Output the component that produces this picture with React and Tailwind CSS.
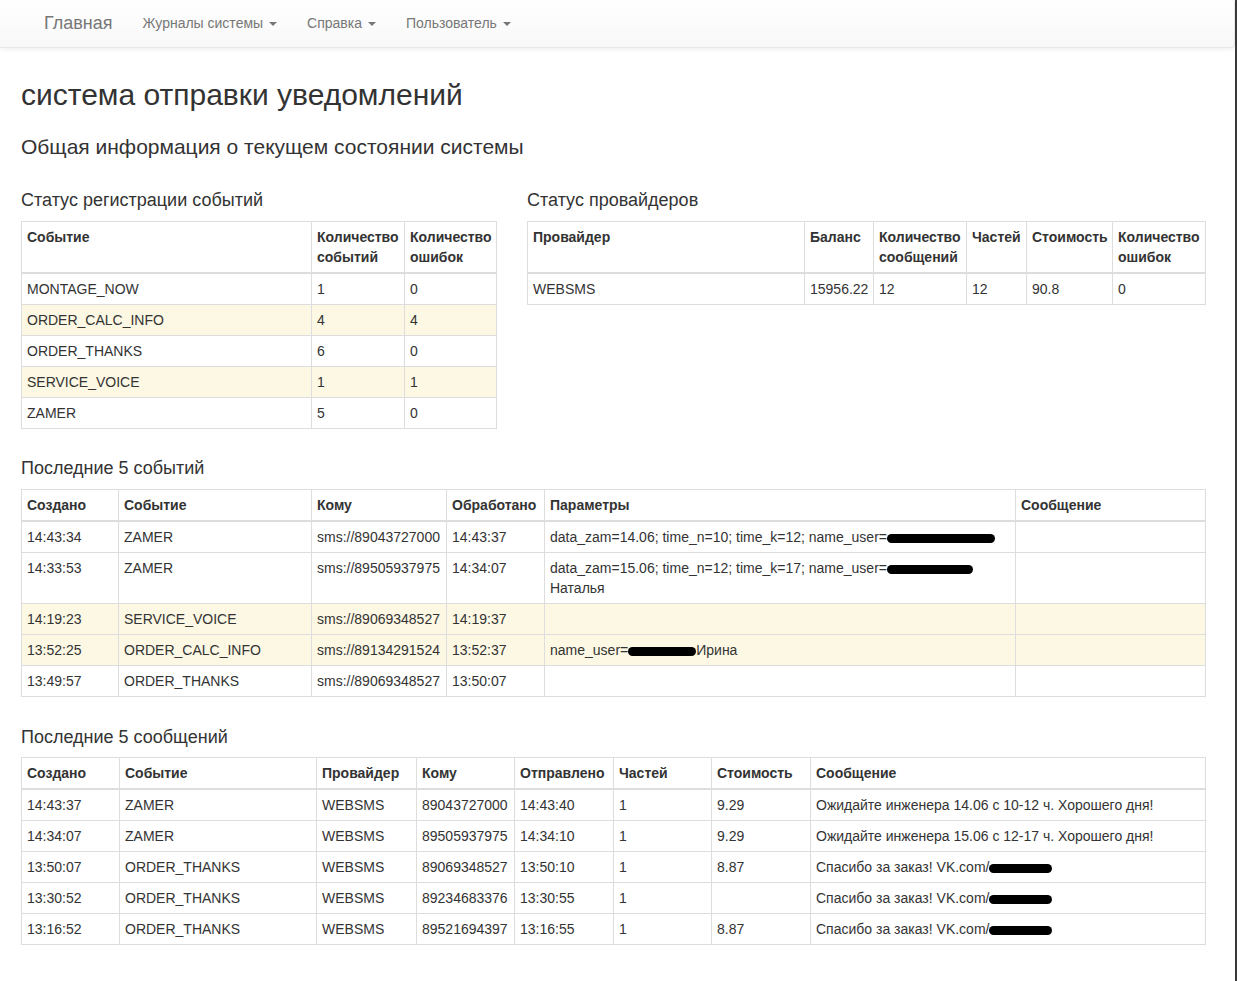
const font = { fontFamily: '"Liberation Sans", Arial, Helvetica, sans-serif' };

const eventStats = [
  { name: 'MONTAGE_NOW', count: 1, errors: 0 },
  { name: 'ORDER_CALC_INFO', count: 4, errors: 4, warn: true },
  { name: 'ORDER_THANKS', count: 6, errors: 0 },
  { name: 'SERVICE_VOICE', count: 1, errors: 1, warn: true },
  { name: 'ZAMER', count: 5, errors: 0 },
];

const Redacted = ({ w }) => (
  <span className={`inline-block h-[9px] ${w} rounded-full bg-black align-middle`} />
);

const lastEvents = [
  {
    created: '14:43:34', event: 'ZAMER', to: 'sms://89043727000', done: '14:43:37',
    params: <>data_zam=14.06; time_n=10; time_k=12; name_user=<Redacted w="w-[108px]" /></>,
  },
  {
    created: '14:33:53', event: 'ZAMER', to: 'sms://89505937975', done: '14:34:07',
    params: <>data_zam=15.06; time_n=12; time_k=17; name_user=<Redacted w="w-[86px]" /> Наталья</>,
  },
  { created: '14:19:23', event: 'SERVICE_VOICE', to: 'sms://89069348527', done: '14:19:37', params: '', warn: true },
  {
    created: '13:52:25', event: 'ORDER_CALC_INFO', to: 'sms://89134291524', done: '13:52:37',
    params: <>name_user=<Redacted w="w-[68px]" />Ирина</>, warn: true,
  },
  { created: '13:49:57', event: 'ORDER_THANKS', to: 'sms://89069348527', done: '13:50:07', params: '' },
];

const thanks = <>Спасибо за заказ! VK.com/<Redacted w="w-[63px]" /></>;

const lastMessages = [
  { created: '14:43:37', event: 'ZAMER', to: '89043727000', sent: '14:43:40', parts: 1, cost: '9.29', text: 'Ожидайте инженера 14.06 с 10-12 ч. Хорошего дня!' },
  { created: '14:34:07', event: 'ZAMER', to: '89505937975', sent: '14:34:10', parts: 1, cost: '9.29', text: 'Ожидайте инженера 15.06 с 12-17 ч. Хорошего дня!' },
  { created: '13:50:07', event: 'ORDER_THANKS', to: '89069348527', sent: '13:50:10', parts: 1, cost: '8.87', text: thanks },
  { created: '13:30:52', event: 'ORDER_THANKS', to: '89234683376', sent: '13:30:55', parts: 1, cost: '', text: thanks },
  { created: '13:16:52', event: 'ORDER_THANKS', to: '89521694397', sent: '13:16:55', parts: 1, cost: '8.87', text: thanks },
];

const th = 'border border-[#ddd] border-b-2 px-[5px] py-[5px] text-left align-top font-bold';
const td = 'border border-[#ddd] px-[5px] py-[5px] align-top';

function Caret() {
  return <span className="ml-[6px] inline-block h-0 w-0 border-x-4 border-t-4 border-x-transparent border-t-[#777] align-middle" />;
}

function DataTable({ cols, heads, children }) {
  return (
    <table className="w-full table-fixed border-collapse border border-[#ddd] text-[14px] leading-[20px] text-[#333]">
      <colgroup>
        {cols.map((w, i) => <col key={i} style={{ width: w }} />)}
      </colgroup>
      <thead>
        <tr>
          {heads.map((h, i) => <th key={i} className={th}>{h}</th>)}
        </tr>
      </thead>
      <tbody>{children}</tbody>
    </table>
  );
}

export default function App() {
  return (
    <div className="flex min-h-[981px] bg-white text-[#333]" style={font}>
      <div className="w-[1235px]">
        {/* navbar */}
        <nav className="flex h-[48px] items-center rounded-r-[4px] border-r border-b border-[#e7e7e7] bg-gradient-to-b from-white to-[#f8f8f8] pl-[29px] text-[#777] shadow-[0_1px_5px_rgba(0,0,0,0.075)]">
          <span className="px-[15px] text-[18px]">Главная</span>
          <span className="px-[15px] text-[14px]">Журналы системы<Caret /></span>
          <span className="px-[15px] text-[14px]">Справка<Caret /></span>
          <span className="px-[15px] text-[14px]">Пользователь<Caret /></span>
        </nav>

        <main className="ml-[21px] w-[1184px]">
          <h1 className="mt-[30px] text-[30px] leading-[33px] text-[#333]">система отправки уведомлений</h1>
          <h3 className="mt-[24px] text-[21px] leading-[23px]">Общая информация о текущем состоянии системы</h3>

          <div className="mt-[32px] grid grid-cols-[475px_678px] gap-x-[31px]">
            <div>
              <h4 className="mb-[11px] text-[18px] leading-[20px]">Статус регистрации событий</h4>
              <DataTable cols={[290, 93, 92]} heads={['Событие', 'Количество событий', 'Количество ошибок']}>
                {eventStats.map((r) => (
                  <tr key={r.name} className={r.warn ? 'bg-[#fcf8e3]' : ''}>
                    <td className={td}>{r.name}</td>
                    <td className={td}>{r.count}</td>
                    <td className={td}>{r.errors}</td>
                  </tr>
                ))}
              </DataTable>
            </div>
            <div>
              <h4 className="mb-[11px] text-[18px] leading-[20px]">Статус провайдеров</h4>
              <DataTable
                cols={[277, 69, 93, 60, 86, 93]}
                heads={['Провайдер', 'Баланс', 'Количество сообщений', 'Частей', 'Стоимость', 'Количество ошибок']}
              >
                <tr>
                  <td className={td}>WEBSMS</td>
                  <td className={td}>15956.22</td>
                  <td className={td}>12</td>
                  <td className={td}>12</td>
                  <td className={td}>90.8</td>
                  <td className={td}>0</td>
                </tr>
              </DataTable>
            </div>
          </div>

          <h4 className="mt-[29px] mb-[11px] text-[18px] leading-[20px]">Последние 5 событий</h4>
          <DataTable
            cols={[97, 193, 135, 98, 471, 190]}
            heads={['Создано', 'Событие', 'Кому', 'Обработано', 'Параметры', 'Сообщение']}
          >
            {lastEvents.map((r) => (
              <tr key={r.created} className={r.warn ? 'bg-[#fcf8e3]' : ''}>
                <td className={td}>{r.created}</td>
                <td className={td}>{r.event}</td>
                <td className={td}>{r.to}</td>
                <td className={td}>{r.done}</td>
                <td className={td}>{r.params}</td>
                <td className={td}></td>
              </tr>
            ))}
          </DataTable>

          <h4 className="mt-[30px] mb-[10px] text-[18px] leading-[20px]">Последние 5 сообщений</h4>
          <DataTable
            cols={[98, 197, 100, 98, 99, 98, 99, 395]}
            heads={['Создано', 'Событие', 'Провайдер', 'Кому', 'Отправлено', 'Частей', 'Стоимость', 'Сообщение']}
          >
            {lastMessages.map((r) => (
              <tr key={r.created}>
                <td className={td}>{r.created}</td>
                <td className={td}>{r.event}</td>
                <td className={td}>WEBSMS</td>
                <td className={td}>{r.to}</td>
                <td className={td}>{r.sent}</td>
                <td className={td}>{r.parts}</td>
                <td className={td}>{r.cost}</td>
                <td className={td}>{r.text}</td>
              </tr>
            ))}
          </DataTable>
        </main>
      </div>
      <div className="w-[2px] bg-[#3a3a3a]" />
    </div>
  );
}
